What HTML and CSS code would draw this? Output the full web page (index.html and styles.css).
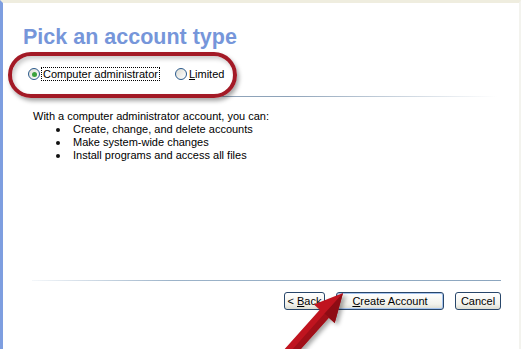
FILE: index.html
```html
<!DOCTYPE html>
<html>
<head>
    <title>Pick an account type</title>
    <link rel="stylesheet" href="styles.css">
</head>
<body>
    <div class="window">
        <div class="page">
            <h1 class="title">Pick an account type</h1>

            <div class="choices">
                <label class="radio">
                    <span class="radio-dot checked"></span>
                    <span class="focus-text">Computer administrator</span>
                </label>
                <label class="radio">
                    <span class="radio-dot"></span>
                    <span><u>L</u>imited</span>
                </label>
            </div>

            <div class="rule top-rule"></div>

            <div class="details">
                <p>With a computer administrator account, you can:</p>
                <ul>
                    <li>Create, change, and delete accounts</li>
                    <li>Make system-wide changes</li>
                    <li>Install programs and access all files</li>
                </ul>
            </div>

            <div class="rule bottom-rule"></div>

            <div class="buttons">
                <button class="btn back">&lt; <u>B</u>ack</button>
                <button class="btn default"><u>C</u>reate Account</button>
                <button class="btn cancel">Cancel</button>
            </div>
        </div>

        <!-- annotation overlays -->
        <div class="highlight"></div>
        <svg class="arrow" viewBox="0 0 521 349" width="521" height="349">
            <polygon points="343,293 313.9,304.5 319.8,309.8 278.4,356 287.4,364 328.8,317.8 334.7,323.1" fill="#c0141f"/>
            <polygon points="343,293 324.3,313.8 328.8,317.8 334.7,323.1" fill="#8e0c14"/>
            <polygon points="324.3,313.8 282.9,360 287.4,364 328.8,317.8" fill="#a00f18"/>
        </svg>
    </div>
</body>
</html>
```

FILE: styles.css
```css
* {
    margin: 0;
    padding: 0;
    box-sizing: border-box;
}

body {
    background-color: #ffffff;
    font-family: "Liberation Sans", Arial, sans-serif;
    font-size: 11px;
    color: #000000;
}

.window {
    position: relative;
    width: 521px;
    height: 349px;
    overflow: hidden;
    background-color: #ffffff;
    border-top: 3px solid #efeddf;
    border-left: 3px solid #7e9ee0;
    border-right: 2px solid #f3f3ee;
}

.page {
    display: flex;
    flex-direction: column;
    height: 100%;
}

.title {
    font-size: 21.5px;
    font-weight: bold;
    color: #7696da;
    line-height: 26px;
    margin: 21px 0 0 20px;
}

.choices {
    display: flex;
    align-items: center;
    gap: 16px;
    margin: 16px 0 0 25px;
    height: 16px;
}

.radio {
    display: flex;
    align-items: center;
    gap: 2px;
}

.radio-dot {
    width: 12px;
    height: 12px;
    border: 1px solid #2a5a8c;
    border-radius: 50%;
    background: linear-gradient(135deg, #dcdcd4, #ffffff);
    display: flex;
    align-items: center;
    justify-content: center;
}

.radio-dot.checked::after {
    content: "";
    width: 5px;
    height: 5px;
    border-radius: 50%;
    background-color: #3ca23c;
}

.focus-text {
    outline: 1px dotted #000000;
    padding: 0 1px;
}

.rule {
    height: 1px;
    margin-right: 22px;
}

.top-rule {
    margin-top: 14px;
    margin-left: 28px;
    background: linear-gradient(to right, #8ea3b9 0%, #8ea3b9 55%, #ffffff 100%);
}

.details {
    margin: 13px 0 0 30px;
    line-height: 13px;
}

.details ul {
    list-style: none;
    margin-left: 40px;
}

.details li {
    position: relative;
}

.details li::before {
    content: "";
    position: absolute;
    left: -17px;
    top: 5px;
    width: 4px;
    height: 4px;
    border-radius: 50%;
    background-color: #111111;
}

.bottom-rule {
    margin-top: auto;
    margin-left: 29px;
    margin-right: 18px;
    background: linear-gradient(to right, #f4f7fa 0%, #9cb3c9 30%, #8ca6bf 100%);
}

.buttons {
    display: flex;
    justify-content: flex-end;
    gap: 11px;
    margin: 11px 18px 39px 0;
}

.btn {
    height: 18px;
    font-family: "Liberation Sans", Arial, sans-serif;
    font-size: 11px;
    color: #000000;
    border: 1px solid #28466a;
    border-radius: 3px;
    background: linear-gradient(to bottom, #ffffff 0%, #f2f2ec 70%, #dcdcd2 100%);
}

.back {
    width: 41px;
}

.default {
    width: 108px;
    box-shadow: inset 0 0 0 1px #a6c4ee;
}

.cancel {
    width: 46px;
}

.highlight {
    position: absolute;
    left: 5px;
    top: 49px;
    width: 229px;
    height: 46px;
    border: 4px solid #a31a26;
    border-radius: 24px;
    box-shadow: 2px 3px 4px rgba(0, 0, 0, 0.35), inset 2px 3px 4px rgba(0, 0, 0, 0.2);
}

.arrow {
    position: absolute;
    left: -3px;
    top: -3px;
    filter: drop-shadow(3px 2px 2px rgba(0, 0, 0, 0.35));
}
```
